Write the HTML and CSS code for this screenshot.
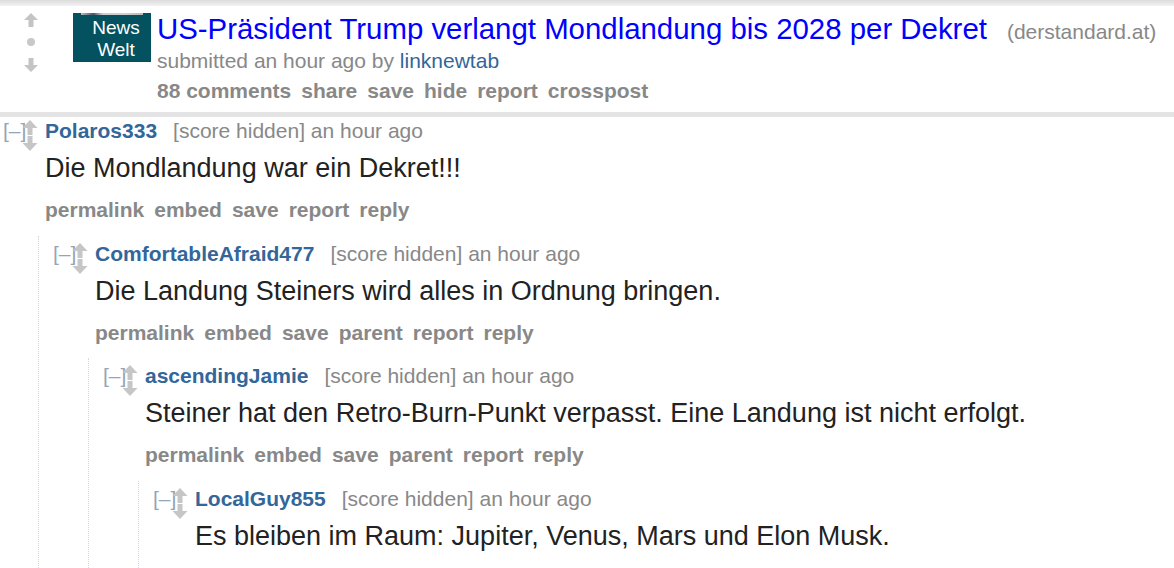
FILE: index.html
```html
<!DOCTYPE html>
<html lang="de">

<head>
    <meta charset="UTF-8">
    <title>US-Präsident Trump verlangt Mondlandung bis 2028 per Dekret</title>
    <link rel="stylesheet" href="styles.css">
</head>

<body>
    <div class="top-band"></div>

    <div class="post">
        <div class="post-vote">
            <svg width="14" height="60" viewBox="0 0 14 60">
                <polygon points="7,0 14,7 9.5,7 9.5,14 4.5,14 4.5,7 0,7" fill="#c4c4c4" />
                <circle cx="7" cy="29" r="4" fill="#c8c8c8" />
                <polygon points="4.5,45 9.5,45 9.5,52 14,52 7,59 0,52 4.5,52" fill="#c4c4c4" />
            </svg>
        </div>
        <div class="thumb">
            <span class="thumb-strip"></span>
            <span class="thumb-text">News<br>Welt</span>
        </div>
        <div class="entry">
            <p class="title"><a href="#">US-Präsident Trump verlangt Mondlandung bis 2028 per Dekret</a><span class="domain">(derstandard.at)</span></p>
            <p class="tagline">submitted an hour ago by <a href="#" class="author-link">linknewtab</a></p>
            <ul class="buttons">
                <li><a href="#">88 comments</a></li>
                <li><a href="#">share</a></li>
                <li><a href="#">save</a></li>
                <li><a href="#">hide</a></li>
                <li><a href="#">report</a></li>
                <li><a href="#">crosspost</a></li>
            </ul>
        </div>
    </div>

    <div class="post-sep"></div>

    <div class="comments">
        <div class="comment">
            <div class="comment-row">
                <div class="midcol">
                    <span class="expand">[–]</span>
                    <svg class="arrows" width="16" height="31" viewBox="0 0 16 31">
                        <polygon points="8,0 15.5,8 10.5,8 10.5,15 5.5,15 5.5,8 0.5,8" fill="#c6c6c6" />
                        <polygon points="5.5,16 10.5,16 10.5,23 15.5,23 8,31 0.5,23 5.5,23" fill="#c6c6c6" />
                    </svg>
                </div>
                <div class="entry">
                    <p class="comment-tagline"><a href="#" class="author">Polaros333</a><span class="score">[score hidden] an hour ago</span></p>
                    <p class="md">Die Mondlandung war ein Dekret!!!</p>
                    <ul class="buttons">
                        <li><a href="#">permalink</a></li>
                        <li><a href="#">embed</a></li>
                        <li><a href="#">save</a></li>
                        <li><a href="#">report</a></li>
                        <li><a href="#">reply</a></li>
                    </ul>
                </div>
            </div>

            <div class="child">
                <div class="comment">
                    <div class="comment-row">
                        <div class="midcol">
                            <span class="expand">[–]</span>
                            <svg class="arrows" width="16" height="31" viewBox="0 0 16 31">
                                <polygon points="8,0 15.5,8 10.5,8 10.5,15 5.5,15 5.5,8 0.5,8" fill="#c6c6c6" />
                                <polygon points="5.5,16 10.5,16 10.5,23 15.5,23 8,31 0.5,23 5.5,23" fill="#c6c6c6" />
                            </svg>
                        </div>
                        <div class="entry">
                            <p class="comment-tagline"><a href="#" class="author">ComfortableAfraid477</a><span class="score">[score hidden] an hour ago</span></p>
                            <p class="md">Die Landung Steiners wird alles in Ordnung bringen.</p>
                            <ul class="buttons">
                                <li><a href="#">permalink</a></li>
                                <li><a href="#">embed</a></li>
                                <li><a href="#">save</a></li>
                                <li><a href="#">parent</a></li>
                                <li><a href="#">report</a></li>
                                <li><a href="#">reply</a></li>
                            </ul>
                        </div>
                    </div>

                    <div class="child">
                        <div class="comment">
                            <div class="comment-row">
                                <div class="midcol">
                                    <span class="expand">[–]</span>
                                    <svg class="arrows" width="16" height="31" viewBox="0 0 16 31">
                                        <polygon points="8,0 15.5,8 10.5,8 10.5,15 5.5,15 5.5,8 0.5,8" fill="#c6c6c6" />
                                        <polygon points="5.5,16 10.5,16 10.5,23 15.5,23 8,31 0.5,23 5.5,23" fill="#c6c6c6" />
                                    </svg>
                                </div>
                                <div class="entry">
                                    <p class="comment-tagline"><a href="#" class="author">ascendingJamie</a><span class="score">[score hidden] an hour ago</span></p>
                                    <p class="md">Steiner hat den Retro-Burn-Punkt verpasst. Eine Landung ist nicht erfolgt.</p>
                                    <ul class="buttons">
                                        <li><a href="#">permalink</a></li>
                                        <li><a href="#">embed</a></li>
                                        <li><a href="#">save</a></li>
                                        <li><a href="#">parent</a></li>
                                        <li><a href="#">report</a></li>
                                        <li><a href="#">reply</a></li>
                                    </ul>
                                </div>
                            </div>

                            <div class="child">
                                <div class="comment">
                                    <div class="comment-row">
                                        <div class="midcol">
                                            <span class="expand">[–]</span>
                                            <svg class="arrows" width="16" height="31" viewBox="0 0 16 31">
                                                <polygon points="8,0 15.5,8 10.5,8 10.5,15 5.5,15 5.5,8 0.5,8" fill="#c6c6c6" />
                                                <polygon points="5.5,16 10.5,16 10.5,23 15.5,23 8,31 0.5,23 5.5,23" fill="#c6c6c6" />
                                            </svg>
                                        </div>
                                        <div class="entry">
                                            <p class="comment-tagline"><a href="#" class="author">LocalGuy855</a><span class="score">[score hidden] an hour ago</span></p>
                                            <p class="md">Es bleiben im Raum: Jupiter, Venus, Mars und Elon Musk.</p>
                                        </div>
                                    </div>
                                </div>
                            </div>
                        </div>
                    </div>
                </div>
            </div>
        </div>
    </div>
</body>

</html>
```

FILE: styles.css
```css
* {
    margin: 0;
    padding: 0;
    box-sizing: border-box;
}

body {
    font-family: "Liberation Sans", Arial, sans-serif;
    background-color: #fff;
    color: #222;
    overflow: hidden;
}

a {
    text-decoration: none;
}

ul {
    list-style: none;
}

.top-band {
    height: 6px;
    background: linear-gradient(#dcdcdc, #f2f2f2);
}

/* post */

.post {
    display: flex;
    height: 106px;
}

.post-vote {
    width: 73px;
    padding-left: 24px;
    padding-top: 7px;
}

.post-vote svg {
    display: block;
}

.thumb {
    position: relative;
    width: 78px;
    height: 49px;
    margin-top: 7px;
    margin-right: 6px;
    background-color: #04525f;
    color: #fff;
    font-size: 19px;
    line-height: 22px;
    text-align: center;
    padding-left: 8px;
    padding-top: 4px;
}

.thumb-strip {
    position: absolute;
    left: 8px;
    top: 0;
    width: 62px;
    height: 2px;
    background: linear-gradient(90deg, #b8bcc4, #4a5670 20%, #c9ccd2 35%, #d0d0d0 70%, #b5b8bd);
}

.post .entry {
    padding-top: 7px;
}

.title {
    font-size: 29.4px;
    line-height: 32px;
    white-space: nowrap;
}

.title a {
    color: #0000ff;
}

.domain {
    font-size: 21px;
    color: #888;
    margin-left: 20px;
}

.tagline {
    font-size: 21px;
    line-height: 30px;
    margin-top: -2px;
    color: #888;
}

.author-link {
    color: #336699;
}

.buttons {
    display: flex;
    gap: 10px;
    font-size: 21px;
    font-weight: bold;
    line-height: 30px;
}

.buttons a {
    color: #888;
}

.post-sep {
    height: 5px;
    background-color: #e4e4e4;
}

/* comments */

.comment-row {
    display: flex;
}

.midcol {
    display: flex;
    align-items: flex-start;
    width: 45px;
    padding-left: 3px;
    flex-shrink: 0;
}

.expand {
    font-size: 21px;
    line-height: 28px;
    color: #93a5b9;
    width: 19px;
    white-space: nowrap;
}

.arrows {
    display: block;
    margin-top: 3px;
}

.comment-tagline {
    font-size: 21px;
    line-height: 28px;
    white-space: nowrap;
}

.author {
    color: #336699;
    font-weight: bold;
    margin-right: 16px;
}

.score {
    color: #888;
}

.md {
    font-size: 27px;
    line-height: 36px;
    margin-top: 5px;
    white-space: nowrap;
}

.comment .buttons {
    line-height: 28px;
    margin-top: 10px;
}

.child {
    margin-left: 38px;
    margin-top: 11.5px;
    padding-top: 4px;
    padding-left: 11px;
    border-left: 1px dotted #d6d6e6;
    padding-bottom: 40px;
}
```
